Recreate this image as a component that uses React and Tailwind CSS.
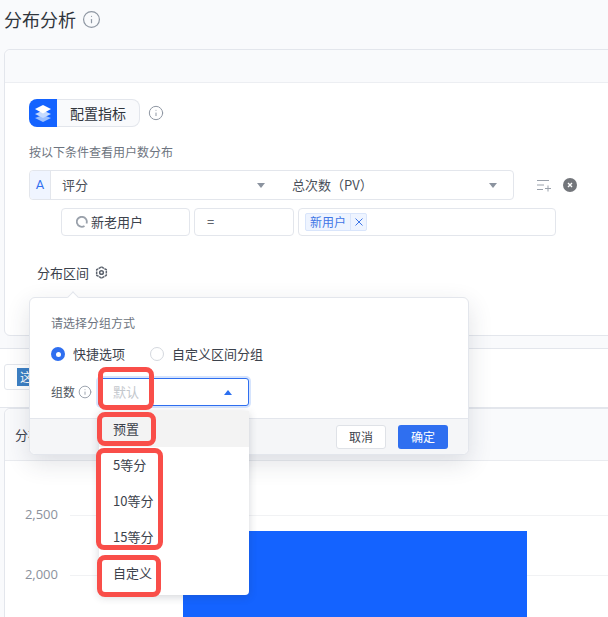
import { Info } from 'lucide-react';

const cjk = { fontFamily: '"Noto Sans CJK SC", sans-serif' };

function Caret({ up }) {
  return (
    <span
      className={`w-0 h-0 border-x-[4px] border-x-transparent ${up ? 'border-b-[5px] border-b-[#2b6ff0]' : 'border-t-[5px] border-t-[#8b939f]'}`}
    />
  );
}

function InfoIcon({ size = 14, className = '' }) {
  return <Info size={size} strokeWidth={1.5} className={`text-[#8f97a3] ${className}`} />;
}

// capa azul del boton de metricas
function LayersIcon() {
  return (
    <svg width="20" height="20" viewBox="0 0 20 20">
      <path d="M10 12 L18 15 L10 19 L2 15 Z" fill="#9cc0ff" />
      <path d="M10 7.5 L18 11 L10 15 L2 11 Z" fill="#c6dbff" />
      <path d="M10 2 L18 6 L10 10.5 L2 6 Z" fill="#ffffff" />
    </svg>
  );
}

function GearIcon() {
  return (
    <svg width="13" height="13" viewBox="0 0 14 14" fill="none" stroke="#5c636e" strokeWidth="1.6">
      <path d="M7 1 L12.2 4 V10 L7 13 L1.8 10 V4 Z" strokeLinejoin="round" strokeDasharray="3 0.6" />
      <circle cx="7" cy="7" r="2" />
    </svg>
  );
}

function AddListIcon() {
  return (
    <svg width="14" height="13" viewBox="0 0 14 13" fill="none" stroke="#9aa1ab" strokeWidth="1">
      <path d="M0 1.5 H12 M0 6 H7 M0 10.5 H6 M8 9.5 H14 M11 6.5 V12.5" />
    </svg>
  );
}

function CloseCircle() {
  return (
    <svg width="14" height="14" viewBox="0 0 14 14">
      <circle cx="7" cy="7" r="7" fill="#73767b" />
      <path d="M5 5 L9 9 M9 5 L5 9" stroke="#fff" strokeWidth="1.4" />
    </svg>
  );
}

function RedBox({ className }) {
  return <div className={`absolute border-[5px] border-[#f94e49] rounded-[8px] pointer-events-none ${className}`} />;
}

function Popover() {
  return (
    <div className="absolute left-[29px] top-[297px] w-[440px] h-[158px] bg-white border border-[#e3e6ec] rounded-[6px] shadow-[0_8px_24px_rgba(40,50,70,0.14)] flex flex-col">
      <div className="absolute -top-[5px] left-[39px] w-2 h-2 bg-white border-l border-t border-[#e3e6ec] rotate-45" />
      <div className="flex-1 pl-[21px] pt-[17px]">
        <p className="text-[12px] leading-4 text-[#6d7480]">请选择分组方式</p>
        <div className="flex items-center mt-[14px] h-[18px] text-[13px] text-[#3c424c]">
          <span className="w-[14px] h-[14px] rounded-full bg-[#2f6ff0] flex items-center justify-center">
            <span className="w-[5px] h-[5px] rounded-full bg-white" />
          </span>
          <span className="ml-2">快捷选项</span>
          <span className="ml-[25px] w-[14px] h-[14px] rounded-full border border-[#d4d8de] bg-white" />
          <span className="ml-2">自定义区间分组</span>
        </div>
        <div className="flex items-center mt-[15px] text-[12px] text-[#4f5560]">
          <span>组数</span>
          <InfoIcon size={14} className="ml-[3px]" />
          <div className="ml-[6px] w-[151px] h-[28px] bg-white border border-[#2f6ff0] rounded-[3px] shadow-[0_0_0_2px_#d6e4fd] flex items-center justify-between pl-[14px] pr-[16px]">
            <span className="text-[13px] text-[#c3c7cd]">默认</span>
            <Caret up />
          </div>
        </div>
      </div>
      <div className="h-[36px] bg-[#f5f6f8] border-t border-[#e3e6ec] rounded-b-[6px] flex items-center justify-end gap-[12px] pr-[20px]">
        <button className="w-[50px] h-[24px] bg-white border border-[#dfe2e7] rounded-[3px] text-[12px] text-[#3c424c]">取消</button>
        <button className="w-[50px] h-[24px] bg-[#2f6ff0] rounded-[3px] text-[12px] text-white">确定</button>
      </div>
    </div>
  );
}

function GroupDropdown() {
  return (
    <div className="absolute left-[99px] top-[411px] w-[150px] h-[184px] bg-white rounded-b-[4px] shadow-[0_2px_8px_rgba(40,50,70,0.2)] text-[13px] text-[#3c424c]">
      <div className="h-[36px] bg-[#f3f3f3] flex items-center pl-[14px]">预置</div>
      {['5等分', '10等分', '15等分', '自定义'].map((opt) => (
        <div key={opt} className="h-[36px] flex items-center pl-[14px]">{opt}</div>
      ))}
    </div>
  );
}

export default function App() {
  return (
    <div className="relative w-[608px] h-[617px] overflow-hidden bg-[#f9fafc]" style={cjk}>
      {/* Titulo */}
      <div className="h-[49px] pt-[5px] pl-[4px] flex items-start gap-[6px]">
        <h1 className="text-[18px] leading-[28px] text-[#30353d]">分布分析</h1>
        <InfoIcon size={19} className="mt-[5px]" />
      </div>

      {/* Tarjeta de configuracion */}
      <div className="ml-[4px] w-[700px] h-[287px] bg-white border border-[#e3e6ec] rounded-[6px]">
        <div className="h-[33px] bg-[#f9fafc] border-b border-[#eceef2] rounded-t-[6px]" />
        <div className="pl-[24px] pt-[16px]">
          <div className="flex items-center">
            <div className="w-[28px] h-[28px] bg-[#1463ff] rounded-l-[8px] flex items-center justify-center">
              <LayersIcon />
            </div>
            <div className="w-[83px] h-[28px] bg-[#f9fafc] border border-l-0 border-[#e3e6ec] rounded-r-[8px] flex items-center justify-center text-[14px] text-[#30353d]">
              配置指标
            </div>
            <InfoIcon size={16} className="ml-[8px]" />
          </div>
          <p className="mt-[17px] text-[12px] leading-4 text-[#6d7480]">按以下条件查看用户数分布</p>
          <div className="mt-[10px] flex items-center">
            <div className="w-[485px] h-[30px] flex items-center border border-[#e3e6ec] rounded-[4px] text-[13px] text-[#4a505a]">
              <span className="w-[21px] h-full bg-[#f0f5ff] border-r border-[#e3e6ec] rounded-l-[4px] flex items-center justify-center text-[#2f6ff0]" style={{ fontFamily: 'Roboto, sans-serif' }}>A</span>
              <span className="ml-[11px] w-[195px]">评分</span>
              <Caret />
              <span className="ml-[27px] w-[197px]">总次数（PV）</span>
              <Caret />
            </div>
            <span className="ml-[23px] flex"><AddListIcon /></span>
            <span className="ml-[12px] flex"><CloseCircle /></span>
          </div>
          <div className="mt-[8px] ml-[32px] flex items-center gap-[4px] text-[13px] text-[#3c424c]">
            <div className="w-[129px] h-[28px] border border-[#e3e6ec] rounded-[4px] flex items-center pl-[14px] gap-[3px]">
              <svg width="12" height="12" viewBox="0 0 12 12" fill="none" stroke="#9aa1ab" strokeWidth="1.8">
                <path d="M8.5 10 A5 5 0 1 1 10.5 7.5" />
              </svg>
              新老用户
            </div>
            <div className="w-[100px] h-[28px] border border-[#e3e6ec] rounded-[4px] flex items-center pl-[12px]">=</div>
            <div className="w-[258px] h-[28px] border border-[#e3e6ec] rounded-[4px] flex items-center pl-[6px]">
              <span className="h-[18px] flex items-center bg-[#eef4ff] border border-[#d9e5fb] rounded-[2px] text-[12px] text-[#3f76e6]">
                <span className="px-[4px]">新用户</span>
                <span className="h-full w-[16px] border-l border-[#d9e5fb] flex items-center justify-center">
                  <svg width="8" height="8" viewBox="0 0 8 8" stroke="#3f76e6" strokeWidth="1"><path d="M0.5 0.5 L7.5 7.5 M7.5 0.5 L0.5 7.5" /></svg>
                </span>
              </span>
            </div>
          </div>
          <div className="mt-[27px] ml-[8px] flex items-center gap-[6px] text-[13px] text-[#3c424c]">
            分布区间 <GearIcon />
          </div>
        </div>
      </div>

      {/* Barra de filtros */}
      <div className="mt-[12px] h-[60px] bg-white border-y border-[#e3e6ec] pt-[15px] pl-[4px]">
        <div className="w-[120px] h-[26px] border border-[#e3e6ec] rounded-[3px] flex items-center pl-[12px]">
          <span className="w-[18px] h-[18px] bg-[#3b7fc4] text-white text-[12px] flex items-center justify-center overflow-hidden">这</span>
        </div>
      </div>

      {/* Tarjeta del grafico */}
      <div className="ml-[4px] w-[700px] h-[260px] bg-white border border-[#e3e6ec] rounded-[6px]">
        <div className="h-[52px] bg-[#f9fafc] border-b border-[#e9ebef] rounded-t-[6px] flex items-center pl-[10px] text-[13px] text-[#3c424c]">
          分布
        </div>
        <div className="relative pt-[44px]">
          <div className="flex items-center h-[20px]">
            <span className="w-[53px] text-right text-[13px] text-[#8b919c]" style={{ fontFamily: '"Open Sans", sans-serif' }}>2,500</span>
            <span className="ml-[12px] flex-1 border-t border-[#f1f2f4]" />
          </div>
          <div className="mt-[40px] flex items-center h-[20px]">
            <span className="w-[53px] text-right text-[13px] text-[#8b919c]" style={{ fontFamily: '"Open Sans", sans-serif' }}>2,000</span>
            <span className="ml-[12px] flex-1 border-t border-[#f1f2f4]" />
          </div>
          <div className="absolute left-[178px] top-[70px] w-[344px] h-[100px] bg-[#1463ff]" />
        </div>
      </div>

      <Popover />
      <GroupDropdown />

      {/* Recuadros rojos de anotacion */}
      <RedBox className="left-[98px] top-[367px] w-[56px] h-[43px]" />
      <RedBox className="left-[97px] top-[412px] w-[59px] h-[34px]" />
      <RedBox className="left-[96px] top-[448px] w-[67px] h-[102px]" />
      <RedBox className="left-[97px] top-[555px] w-[64px] h-[42px]" />
    </div>
  );
}
